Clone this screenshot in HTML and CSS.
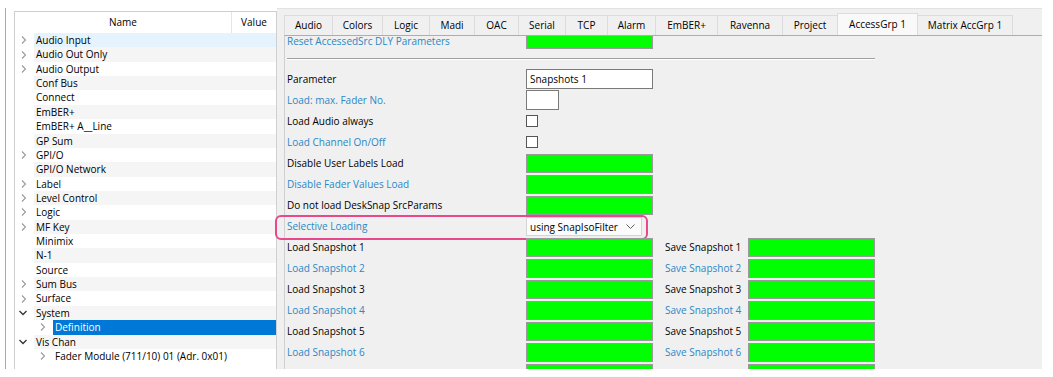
FILE: index.html
```html
<!DOCTYPE html>
<html>
<head>
<meta charset="utf-8">
<link rel="stylesheet" href="styles.css">
</head>
<body>
<div class="app">
  <div class="left">
    <div class="tree">
      <div class="tree-head"><div class="col-name">Name</div><div class="col-value">Value</div></div>
      <div class="tree-body">
        <div class="node hover"><span class="tw"><svg class="chev" width="8" height="8" viewBox="0 0 8 8"><polyline points="2,0.5 5.5,4 2,7.5"/></svg></span><span class="lbl">Audio Input</span></div>
        <div class="node alt"><span class="tw"><svg class="chev" width="8" height="8" viewBox="0 0 8 8"><polyline points="2,0.5 5.5,4 2,7.5"/></svg></span><span class="lbl">Audio Out Only</span></div>
        <div class="node"><span class="tw"><svg class="chev" width="8" height="8" viewBox="0 0 8 8"><polyline points="2,0.5 5.5,4 2,7.5"/></svg></span><span class="lbl">Audio Output</span></div>
        <div class="node alt"><span class="tw"></span><span class="lbl">Conf Bus</span></div>
        <div class="node"><span class="tw"></span><span class="lbl">Connect</span></div>
        <div class="node alt"><span class="tw"></span><span class="lbl">EmBER+</span></div>
        <div class="node"><span class="tw"></span><span class="lbl">EmBER+ A__Line</span></div>
        <div class="node alt"><span class="tw"></span><span class="lbl">GP Sum</span></div>
        <div class="node"><span class="tw"><svg class="chev" width="8" height="8" viewBox="0 0 8 8"><polyline points="2,0.5 5.5,4 2,7.5"/></svg></span><span class="lbl">GPI/O</span></div>
        <div class="node alt"><span class="tw"></span><span class="lbl">GPI/O Network</span></div>
        <div class="node"><span class="tw"><svg class="chev" width="8" height="8" viewBox="0 0 8 8"><polyline points="2,0.5 5.5,4 2,7.5"/></svg></span><span class="lbl">Label</span></div>
        <div class="node alt"><span class="tw"><svg class="chev" width="8" height="8" viewBox="0 0 8 8"><polyline points="2,0.5 5.5,4 2,7.5"/></svg></span><span class="lbl">Level Control</span></div>
        <div class="node"><span class="tw"><svg class="chev" width="8" height="8" viewBox="0 0 8 8"><polyline points="2,0.5 5.5,4 2,7.5"/></svg></span><span class="lbl">Logic</span></div>
        <div class="node alt"><span class="tw"><svg class="chev" width="8" height="8" viewBox="0 0 8 8"><polyline points="2,0.5 5.5,4 2,7.5"/></svg></span><span class="lbl">MF Key</span></div>
        <div class="node"><span class="tw"></span><span class="lbl">Minimix</span></div>
        <div class="node alt"><span class="tw"></span><span class="lbl">N-1</span></div>
        <div class="node"><span class="tw"></span><span class="lbl">Source</span></div>
        <div class="node alt"><span class="tw"><svg class="chev" width="8" height="8" viewBox="0 0 8 8"><polyline points="2,0.5 5.5,4 2,7.5"/></svg></span><span class="lbl">Sum Bus</span></div>
        <div class="node"><span class="tw"><svg class="chev" width="8" height="8" viewBox="0 0 8 8"><polyline points="2,0.5 5.5,4 2,7.5"/></svg></span><span class="lbl">Surface</span></div>
        <div class="node alt"><span class="tw open"><svg class="chev dark" width="8" height="8" viewBox="0 0 8 8"><polyline points="0.5,2 4,5.5 7.5,2"/></svg></span><span class="lbl">System</span></div>
        <div class="node sel"><span class="indent"></span><span class="tw"><svg class="chev" width="8" height="8" viewBox="0 0 8 8"><polyline points="2,0.5 5.5,4 2,7.5"/></svg></span><span class="lbl">Definition</span></div>
        <div class="node alt"><span class="tw open"><svg class="chev dark" width="8" height="8" viewBox="0 0 8 8"><polyline points="0.5,2 4,5.5 7.5,2"/></svg></span><span class="lbl">Vis Chan</span></div>
        <div class="node"><span class="indent"></span><span class="tw"><svg class="chev" width="8" height="8" viewBox="0 0 8 8"><polyline points="2,0.5 5.5,4 2,7.5"/></svg></span><span class="lbl">Fader Module (711/10) 01 (Adr. 0x01)</span></div>
      </div>
    </div>
  </div>

  <div class="right">
    <div class="tabs">
      <div class="tab">Audio</div>
      <div class="tab">Colors</div>
      <div class="tab">Logic</div>
      <div class="tab">Madi</div>
      <div class="tab">OAC</div>
      <div class="tab">Serial</div>
      <div class="tab">TCP</div>
      <div class="tab">Alarm</div>
      <div class="tab">EmBER+</div>
      <div class="tab">Ravenna</div>
      <div class="tab">Project</div>
      <div class="tab active">AccessGrp 1</div>
      <div class="tab">Matrix AccGrp 1</div>
    </div>
    <div class="pane">
      <div class="form">
        <div class="row"><span class="flbl blue first">Reset AccessedSrc DLY Parameters</span><span class="green"></span></div>
        <div class="sep"></div>
        <div class="row"><span class="flbl">Parameter</span><span class="input">Snapshots 1</span></div>
        <div class="row"><span class="flbl blue">Load: max. Fader No.</span><span class="input short"></span></div>
        <div class="row"><span class="flbl">Load Audio always</span><span class="check"></span></div>
        <div class="row"><span class="flbl blue">Load Channel On/Off</span><span class="check"></span></div>
        <div class="row"><span class="flbl">Disable User Labels Load</span><span class="green"></span></div>
        <div class="row"><span class="flbl blue">Disable Fader Values Load</span><span class="green"></span></div>
        <div class="row"><span class="flbl">Do not load DeskSnap SrcParams</span><span class="green"></span></div>
        <div class="row"><span class="flbl blue">Selective Loading</span><span class="select"><span>using SnapIsoFilter</span><svg width="9" height="5" viewBox="0 0 9 5"><polyline points="0.5,0.5 4.5,4.5 8.5,0.5" fill="none" stroke="#606060" stroke-width="1"/></svg></span><span class="hl"></span></div>
        <div class="row"><span class="flbl">Load Snapshot 1</span><span class="green"></span><span class="slbl">Save Snapshot 1</span><span class="green"></span></div>
        <div class="row"><span class="flbl blue">Load Snapshot 2</span><span class="green"></span><span class="slbl blue">Save Snapshot 2</span><span class="green"></span></div>
        <div class="row"><span class="flbl">Load Snapshot 3</span><span class="green"></span><span class="slbl">Save Snapshot 3</span><span class="green"></span></div>
        <div class="row"><span class="flbl blue">Load Snapshot 4</span><span class="green"></span><span class="slbl blue">Save Snapshot 4</span><span class="green"></span></div>
        <div class="row"><span class="flbl">Load Snapshot 5</span><span class="green"></span><span class="slbl">Save Snapshot 5</span><span class="green"></span></div>
        <div class="row"><span class="flbl blue">Load Snapshot 6</span><span class="green"></span><span class="slbl blue">Save Snapshot 6</span><span class="green"></span></div>
        <div class="row"><span class="flbl"></span><span class="green"></span><span class="slbl"></span><span class="green"></span></div>
      </div>
    </div>
  </div>
</div>
</body>
</html>
```

FILE: styles.css
```css
* { box-sizing: border-box; }
body {
  margin: 0;
  background: #fff;
  font-family: "Open Sans", "Noto Sans", sans-serif;
  font-size: 10px;
  color: #000;
}
.app {
  display: flex;
  margin-top: 8px;
  height: 361px;
}
.left {
  flex: none;
  margin-left: 5px;
  border-left: 1px solid #a9a9a9;
  padding: 3px 0 0 8px;
  display: flex;
}
.tree {
  width: 263px;
  border: 1px solid #cfcfcf;
  border-bottom: none;
  background: #fff;
  display: flex;
  flex-direction: column;
  overflow: hidden;
}
.tree-head {
  display: flex;
  height: 21px;
  line-height: 20px;
  flex: none;
}
.col-name {
  width: 217px;
  text-align: center;
  border-right: 1px solid #e5e5e5;
}
.col-value {
  flex: 1;
  text-align: center;
}
.node {
  display: flex;
  height: 14.36px;
  white-space: nowrap;
}
.tw {
  width: 19px;
  flex: none;
  display: flex;
  align-items: center;
  padding-left: 5px;
}
.tw.open { padding-left: 4px; }
.indent { width: 19px; flex: none; }
.chev polyline {
  fill: none;
  stroke: #9a9a9a;
  stroke-width: 1.1;
}
.chev.dark polyline { stroke: #333; stroke-width: 1.3; }
.lbl {
  flex: 1;
  padding-left: 2px;
  line-height: 14.36px;
}
.alt .lbl { background: #f5f5f5; }
.hover .lbl { background: #e5f3ff; }
.sel .lbl { background: #0078d7; color: #fff; }

.right {
  flex: none;
  width: 765px;
  background: #f0f0f0;
  border-top: 1px solid #e2e2e2;
  padding: 4px 0 0 7px;
  display: flex;
  flex-direction: column;
  min-height: 0;
}
.tabs {
  display: flex;
  align-items: flex-end;
  height: 22px;
  flex: none;
}
.tab {
  height: 20px;
  line-height: 19px;
  text-align: center;
  border: 1px solid #dcdcdc;
  border-bottom: none;
  margin-right: -1px;
  background: #f0f0f0;
  white-space: nowrap;
  flex: none;
}
.tab:nth-child(1) { width: 49px; }
.tab:nth-child(2) { width: 51px; }
.tab:nth-child(3) { width: 48px; }
.tab:nth-child(4) { width: 46px; }
.tab:nth-child(5) { width: 45px; }
.tab:nth-child(6) { width: 48px; }
.tab:nth-child(7) { width: 43px; }
.tab:nth-child(8) { width: 49px; }
.tab:nth-child(9) { width: 63px; }
.tab:nth-child(10) { width: 66px; }
.tab:nth-child(11) { width: 56px; }
.tab:nth-child(12) { width: 81px; }
.tab:nth-child(13) { width: 96px; }
.tab.active {
  height: 22px;
  line-height: 20px;
  background: #f9f9f9;
  position: relative;
}
.pane {
  flex: 1;
  min-height: 0;
  border-top: 1px solid #adadad;
  border-left: 1px solid #cfcfcf;
  overflow-x: visible;
  overflow-y: clip;
}
.form {
  padding-left: 2px;
  margin-top: -7px;
}
.row {
  display: flex;
  height: 21px;
  align-items: flex-start;
  position: relative;
  white-space: nowrap;
}
.flbl {
  width: 239px;
  flex: none;
  line-height: 21px;
}
.flbl.first { padding-top: 2px; }
.slbl {
  width: 83px;
  margin-left: 12px;
  flex: none;
  line-height: 21px;
}
.blue { color: #2b87c6; }
.green {
  width: 127px;
  height: 19px;
  margin-top: 1px;
  flex: none;
  background: #00ff00;
  border: 1px solid #9a9a9a;
}
.sep {
  width: 588px;
  border-top: 1px solid #a0a0a0;
  border-bottom: 1px solid #fff;
  margin: 8px 0 9px;
}
.input {
  width: 127px;
  height: 20px;
  flex: none;
  background: #fff;
  border: 1px solid #7a7a7a;
  padding-left: 3px;
  line-height: 18px;
}
.input.short { width: 33px; }
.check {
  width: 12px;
  height: 12px;
  margin-top: 4px;
  flex: none;
  background: #fff;
  border: 1px solid #555;
}
.select {
  width: 116px;
  height: 19px;
  margin-top: 1px;
  flex: none;
  background: #fbfbfb;
  border: 1px solid #d4d4d4;
  display: flex;
  align-items: center;
  justify-content: space-between;
  padding: 0 6px 0 3px;
}
.hl {
  position: absolute;
  left: -12px;
  top: -1px;
  width: 373px;
  height: 25px;
  border: 2px solid #e9488a;
  border-radius: 6px;
  pointer-events: none;
}
```
